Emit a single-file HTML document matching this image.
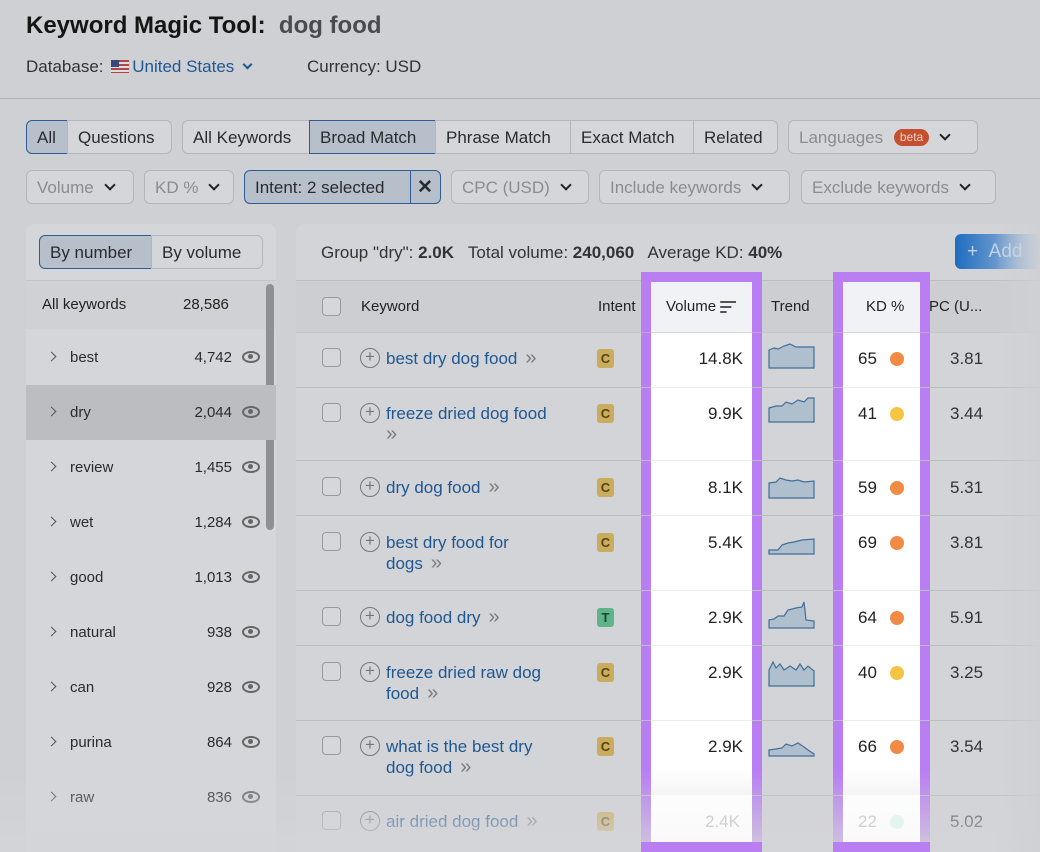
<!DOCTYPE html>
<html><head><meta charset="utf-8"><style>
*{box-sizing:border-box;margin:0;padding:0}
html{overflow:hidden;height:852px}
body{width:1040px;height:852px;overflow:hidden;background:#cfd0d4;font-family:"Liberation Sans",sans-serif;color:#222;position:relative}
.a{position:absolute;white-space:nowrap}
.btn{position:absolute;height:34px;border:1px solid #b4b6ba;border-radius:6px;background:#d5d6d9;font-size:17px;line-height:33px;padding:0 10px;color:#2a2b2d}
.sel{background:#b6bfca;border-color:#2d5d94}
.dim{color:#8a8c90}
.chev{display:inline-block;width:8px;height:8px;border-right:2.5px solid #222;border-bottom:2.5px solid #222;transform:rotate(45deg);margin-left:12px;position:relative;top:-4px}
.lrow{position:absolute;left:26px;width:250px;height:55px;font-size:15px;color:#2a2b2d}
.lrow .g{position:absolute;left:22px;top:23px;width:7px;height:7px;border-right:1.5px solid #555;border-bottom:1.5px solid #555;transform:rotate(-45deg)}
.lrow .t{position:absolute;left:44px;top:19px}
.lrow .n{position:absolute;right:44px;top:19px}
.eye{position:absolute;right:16px;top:21px;width:18px;height:12px;border:2px solid #666;border-radius:50%/50%}
.eye:after{content:"";position:absolute;left:4px;top:1px;width:5px;height:5px;background:#666;border-radius:50%}
.hl{position:absolute;background:#fff}
.line{position:absolute;height:1px;background:#bcbec2}
.kw{position:absolute;left:386px;font-size:17px;color:#1f5792;line-height:21px}
.cb{position:absolute;left:322px;width:19px;height:19px;border:1.5px solid #999;border-radius:4px;background:#d6d7da}
.plus{position:absolute;left:360px;width:20px;height:20px;border:1.5px solid #777;border-radius:50%;font-size:17px;line-height:16px;text-align:center;color:#777}
.ic{position:absolute;left:597px;width:17px;height:19px;border-radius:3px;background:#c9ac5e;color:#5a4511;font-size:13px;font-weight:bold;text-align:center;line-height:19px}
.v{position:absolute;right:297px;font-size:17px;text-align:right}
.kd{position:absolute;left:858px;font-size:17px}
.dot{position:absolute;left:890px;width:14px;height:14px;border-radius:50%}
.cpc{position:absolute;left:950px;font-size:17px;color:#333}
.ar{color:#7a7c80;margin-left:8px;font-size:20px}
</style></head><body>
<div class="a" style="left:26px;top:12px;font-size:24px;font-weight:bold;color:#151515">Keyword Magic Tool:&nbsp; <span style="color:#4a4b4e">dog food</span></div>
<div class="a" style="left:26px;top:57px;font-size:17px;color:#333">Database: <span style="display:inline-block;width:18px;height:13px;background:repeating-linear-gradient(#b0454a 0 2px,#ddd 2px 4px);position:relative;top:1px;margin:0 3px"><span style="position:absolute;left:0;top:0;width:8px;height:7px;background:#3b4a7a"></span></span><span style="color:#1f5792">United States</span><span class="chev" style="border-color:#1f5792;width:7px;height:7px;margin-left:10px"></span></div>
<div class="a" style="left:307px;top:57px;font-size:17px;color:#333">Currency: USD</div>
<div class="a" style="left:0;top:98px;width:1040px;height:1px;background:#b2b4b8"></div>

<div class="btn sel" style="left:26px;top:120px;width:42px;border-radius:6px 0 0 6px">All</div>
<div class="btn" style="left:67px;top:120px;width:105px;border-radius:0 6px 6px 0">Questions</div>
<div class="btn" style="left:182px;top:120px;width:128px;border-radius:6px 0 0 6px">All Keywords</div>
<div class="btn sel" style="left:309px;top:120px;width:127px;border-radius:0">Broad Match</div>
<div class="btn" style="left:435px;top:120px;width:136px;border-radius:0">Phrase Match</div>
<div class="btn" style="left:570px;top:120px;width:124px;border-radius:0">Exact Match</div>
<div class="btn" style="left:693px;top:120px;width:85px;border-radius:0 6px 6px 0">Related</div>
<div class="btn dim" style="left:788px;top:120px;width:190px">Languages <span style="display:inline-block;background:#c4502f;color:#f3d3c8;font-size:12px;line-height:17px;padding:0 6px;border-radius:9px;position:relative;top:-2px;margin-left:6px">beta</span><span class="chev"></span></div>

<div class="btn dim" style="left:26px;top:170px;width:108px">Volume<span class="chev"></span></div>
<div class="btn dim" style="left:144px;top:170px;width:90px">KD %<span class="chev"></span></div>
<div class="btn sel" style="left:244px;top:170px;width:197px">Intent: 2 selected<span style="position:absolute;left:165px;top:0;width:1px;height:32px;background:#2d5d94"></span><span style="position:absolute;left:172px;font-weight:bold;font-size:19px">✕</span></div>
<div class="btn dim" style="left:451px;top:170px;width:138px">CPC (USD)<span class="chev"></span></div>
<div class="btn dim" style="left:599px;top:170px;width:191px">Include keywords<span class="chev"></span></div>
<div class="btn dim" style="left:801px;top:170px;width:195px">Exclude keywords<span class="chev"></span></div>

<!-- left panel -->
<div class="a" style="left:26px;top:224px;width:250px;height:640px;background:#d5d6d9;border-radius:8px"></div>
<div class="btn sel" style="left:39px;top:235px;width:113px;border-radius:6px 0 0 6px">By number</div>
<div class="btn" style="left:151px;top:235px;width:112px;border-radius:0 6px 6px 0">By volume</div>
<div class="a" style="left:26px;top:280px;width:250px;height:1px;background:#c3c5c8"></div>
<div class="a" style="left:26px;top:281px;width:250px;height:48px;background:#d0d1d4"></div>
<div class="a" style="left:42px;top:296px;font-size:15px">All keywords</div>
<div class="a" style="left:183px;top:296px;font-size:15px">28,586</div>
<div class="a" style="left:266px;top:284px;width:8px;height:246px;background:#8e9094;border-radius:4px"></div>
<div class="lrow" style="top:330px"><i class="g"></i><span class="t">best</span><span class="n">4,742</span><i class="eye"></i></div>
<div class="lrow" style="top:385px;background:#bcbdc1"><i class="g"></i><span class="t">dry</span><span class="n">2,044</span><i class="eye"></i></div>
<div class="lrow" style="top:440px"><i class="g"></i><span class="t">review</span><span class="n">1,455</span><i class="eye"></i></div>
<div class="lrow" style="top:495px"><i class="g"></i><span class="t">wet</span><span class="n">1,284</span><i class="eye"></i></div>
<div class="lrow" style="top:550px"><i class="g"></i><span class="t">good</span><span class="n">1,013</span><i class="eye"></i></div>
<div class="lrow" style="top:605px"><i class="g"></i><span class="t">natural</span><span class="n">938</span><i class="eye"></i></div>
<div class="lrow" style="top:660px"><i class="g"></i><span class="t">can</span><span class="n">928</span><i class="eye"></i></div>
<div class="lrow" style="top:715px"><i class="g"></i><span class="t">purina</span><span class="n">864</span><i class="eye"></i></div>
<div class="lrow" style="top:770px"><i class="g"></i><span class="t">raw</span><span class="n">836</span><i class="eye"></i></div>

<!-- right panel -->
<div class="a" style="left:296px;top:224px;width:760px;height:640px;background:#d3d4d7;border-radius:8px"></div>
<div class="a" style="left:321px;top:243px;font-size:17px;color:#333">Group "dry": <b>2.0K</b>&nbsp;&nbsp; Total volume: <b>240,060</b>&nbsp;&nbsp; Average KD: <b>40%</b></div>
<div class="a" style="left:955px;top:234px;width:100px;height:35px;background:linear-gradient(90deg,#1e6cc0,#a8bfd8 80%,#cfd0d4);border-radius:6px;color:#c0d4ea;font-size:19px;line-height:35px;padding-left:12px">+ &nbsp;Add</div>
<div class="a" style="left:296px;top:280px;width:744px;height:52px;background:#cdced2"></div>
<div class="line" style="left:296px;top:280px;width:744px"></div>
<div class="cb" style="top:297px"></div>
<div class="a" style="left:361px;top:298px;font-size:15px">Keyword</div>
<div class="a" style="left:598px;top:298px;font-size:15px">Intent</div>
<div class="a" style="left:771px;top:298px;font-size:15px">Trend</div>
<div class="a" style="left:929px;top:298px;font-size:15px">PC (U...</div>

<!-- highlight columns -->
<div class="a" style="left:641px;top:272px;width:121px;height:580px;background:#b87ef2"></div>
<div class="hl" style="left:651px;top:282px;width:101px;height:560px"></div>
<div class="a" style="left:651px;top:282px;width:101px;height:50px;background:#f1f2f6"></div>
<div class="a" style="left:666px;top:298px;font-size:15px">Volume <span style="display:inline-block;vertical-align:middle;width:16px;height:12px;background:linear-gradient(#555 0 2px,transparent 2px 5px,#555 5px 7px,transparent 7px 10px,#555 10px 12px);clip-path:polygon(0 0,100% 0,100% 20%,70% 20%,70% 60%,40% 60%,40% 100%,0 100%)"></span></div>
<div class="a" style="left:833px;top:272px;width:97px;height:580px;background:#b87ef2"></div>
<div class="hl" style="left:843px;top:282px;width:77px;height:560px"></div>
<div class="a" style="left:843px;top:282px;width:77px;height:50px;background:#f1f2f6"></div>
<div class="a" style="left:866px;top:298px;font-size:15px">KD %</div>

<!-- row lines -->
<div class="line" style="left:296px;top:332px;width:744px;opacity:.6"></div>
<div class="line" style="left:296px;top:387px;width:744px"></div>
<div class="line" style="left:296px;top:460px;width:744px"></div>
<div class="line" style="left:296px;top:515px;width:744px"></div>
<div class="line" style="left:296px;top:590px;width:744px"></div>
<div class="line" style="left:296px;top:645px;width:744px"></div>
<div class="line" style="left:296px;top:720px;width:744px"></div>
<div class="line" style="left:296px;top:795px;width:744px"></div>
<div class="line" style="left:651px;top:387px;width:101px;background:#eee"></div>
<div class="line" style="left:651px;top:460px;width:101px;background:#eee"></div>
<div class="line" style="left:651px;top:515px;width:101px;background:#eee"></div>
<div class="line" style="left:651px;top:590px;width:101px;background:#eee"></div>
<div class="line" style="left:651px;top:645px;width:101px;background:#eee"></div>
<div class="line" style="left:651px;top:720px;width:101px;background:#eee"></div>
<div class="line" style="left:651px;top:795px;width:101px;background:#eee"></div>
<div class="line" style="left:843px;top:387px;width:77px;background:#eee"></div>
<div class="line" style="left:843px;top:460px;width:77px;background:#eee"></div>
<div class="line" style="left:843px;top:515px;width:77px;background:#eee"></div>
<div class="line" style="left:843px;top:590px;width:77px;background:#eee"></div>
<div class="line" style="left:843px;top:645px;width:77px;background:#eee"></div>
<div class="line" style="left:843px;top:720px;width:77px;background:#eee"></div>
<div class="line" style="left:843px;top:795px;width:77px;background:#eee"></div>

<!-- rows -->
<div class="cb" style="top:348px"></div><div class="plus" style="top:348px">+</div><div class="kw" style="top:348px">best dry dog food<span class="ar">»</span></div><div class="ic" style="top:349px">C</div><div class="v" style="top:349px">14.8K</div><div class="kd" style="top:349px">65</div><div class="dot" style="top:352px;background:#f08a45"></div><div class="cpc" style="top:349px">3.81</div>
<div class="cb" style="top:403px"></div><div class="plus" style="top:403px">+</div><div class="kw" style="top:403px">freeze dried dog food<br><span class="ar" style="margin:0">»</span></div><div class="ic" style="top:404px">C</div><div class="v" style="top:404px">9.9K</div><div class="kd" style="top:404px">41</div><div class="dot" style="top:407px;background:#f6c343"></div><div class="cpc" style="top:404px">3.44</div>
<div class="cb" style="top:477px"></div><div class="plus" style="top:477px">+</div><div class="kw" style="top:477px">dry dog food<span class="ar">»</span></div><div class="ic" style="top:478px">C</div><div class="v" style="top:478px">8.1K</div><div class="kd" style="top:478px">59</div><div class="dot" style="top:481px;background:#f08a45"></div><div class="cpc" style="top:478px">5.31</div>
<div class="cb" style="top:532px"></div><div class="plus" style="top:532px">+</div><div class="kw" style="top:532px">best dry food for<br>dogs<span class="ar">»</span></div><div class="ic" style="top:533px">C</div><div class="v" style="top:533px">5.4K</div><div class="kd" style="top:533px">69</div><div class="dot" style="top:536px;background:#f08a45"></div><div class="cpc" style="top:533px">3.81</div>
<div class="cb" style="top:607px"></div><div class="plus" style="top:607px">+</div><div class="kw" style="top:607px">dog food dry<span class="ar">»</span></div><div class="ic" style="top:608px;background:#5fb48a;color:#1b4a33">T</div><div class="v" style="top:608px">2.9K</div><div class="kd" style="top:608px">64</div><div class="dot" style="top:611px;background:#f08a45"></div><div class="cpc" style="top:608px">5.91</div>
<div class="cb" style="top:662px"></div><div class="plus" style="top:662px">+</div><div class="kw" style="top:662px">freeze dried raw dog<br>food<span class="ar">»</span></div><div class="ic" style="top:663px">C</div><div class="v" style="top:663px">2.9K</div><div class="kd" style="top:663px">40</div><div class="dot" style="top:666px;background:#f6c343"></div><div class="cpc" style="top:663px">3.25</div>
<div class="cb" style="top:736px"></div><div class="plus" style="top:736px">+</div><div class="kw" style="top:736px">what is the best dry<br>dog food<span class="ar">»</span></div><div class="ic" style="top:737px">C</div><div class="v" style="top:737px">2.9K</div><div class="kd" style="top:737px">66</div><div class="dot" style="top:740px;background:#f08a45"></div><div class="cpc" style="top:737px">3.54</div>
<div class="cb" style="top:811px"></div><div class="plus" style="top:811px">+</div><div class="kw" style="top:811px">air dried dog food<span class="ar">»</span></div><div class="ic" style="top:812px">C</div><div class="cpc" style="top:812px">5.02</div>

<!-- trends -->
<svg class="a" style="left:768px;top:340px" width="48" height="440" viewBox="0 0 48 440">
<g fill="#b0bfcd" stroke="#3f6f9a" stroke-width="1.2">
<path d="M1 10 L6 8 L10 9 L16 6 L22 4 L28 7 L46 7 L46 28 L1 28Z"/>
<path d="M1 68 L8 66 L14 66 L18 62 L24 64 L30 60 L36 62 L40 58 L46 58 L46 82 L1 82Z"/>
<path d="M1 143 L8 142 L12 138 L18 140 L24 141 L30 140 L36 142 L46 141 L46 158 L1 158Z"/>
<path d="M1 210 L10 210 L14 205 L20 203 L26 202 L34 200 L46 199 L46 214 L1 214Z"/>
<path d="M1 280 L6 279 L10 276 L16 276 L20 270 L28 268 L34 267 L36 262 L38 280 L46 281 L46 288 L1 288Z"/>
<path d="M1 330 L5 322 L8 328 L12 324 L16 330 L22 326 L28 330 L32 324 L36 330 L40 326 L46 331 L46 346 L1 346Z"/>
<path d="M1 410 L8 409 L14 408 L18 404 L24 406 L30 403 L36 407 L40 410 L46 414 L46 416 L1 416Z"/>
</g></svg>

<!-- bottom fade & right fade -->
<div class="a" style="left:0;top:770px;width:1040px;height:82px;background:linear-gradient(rgba(207,208,212,0),rgba(212,213,217,.85))"></div>
<div class="hl" style="left:651px;top:795px;width:101px;height:47px;opacity:.8"></div>
<div class="hl" style="left:843px;top:795px;width:77px;height:47px;opacity:.8"></div>
<div class="a" style="left:705px;top:812px;font-size:17px;color:#d0d0d0">2.4K</div>
<div class="a" style="left:858px;top:812px;font-size:17px;color:#d0d0d0">22</div>
<div class="a" style="left:890px;top:815px;width:14px;height:14px;border-radius:50%;background:#e4f5ee"></div>
<div class="a" style="left:641px;top:842px;width:121px;height:10px;background:#b87ef2"></div>
<div class="a" style="left:833px;top:842px;width:97px;height:10px;background:#b87ef2"></div>
<div class="a" style="left:995px;top:100px;width:45px;height:752px;background:linear-gradient(90deg,rgba(207,208,212,0),rgba(207,208,212,.9))"></div>
</body></html>
